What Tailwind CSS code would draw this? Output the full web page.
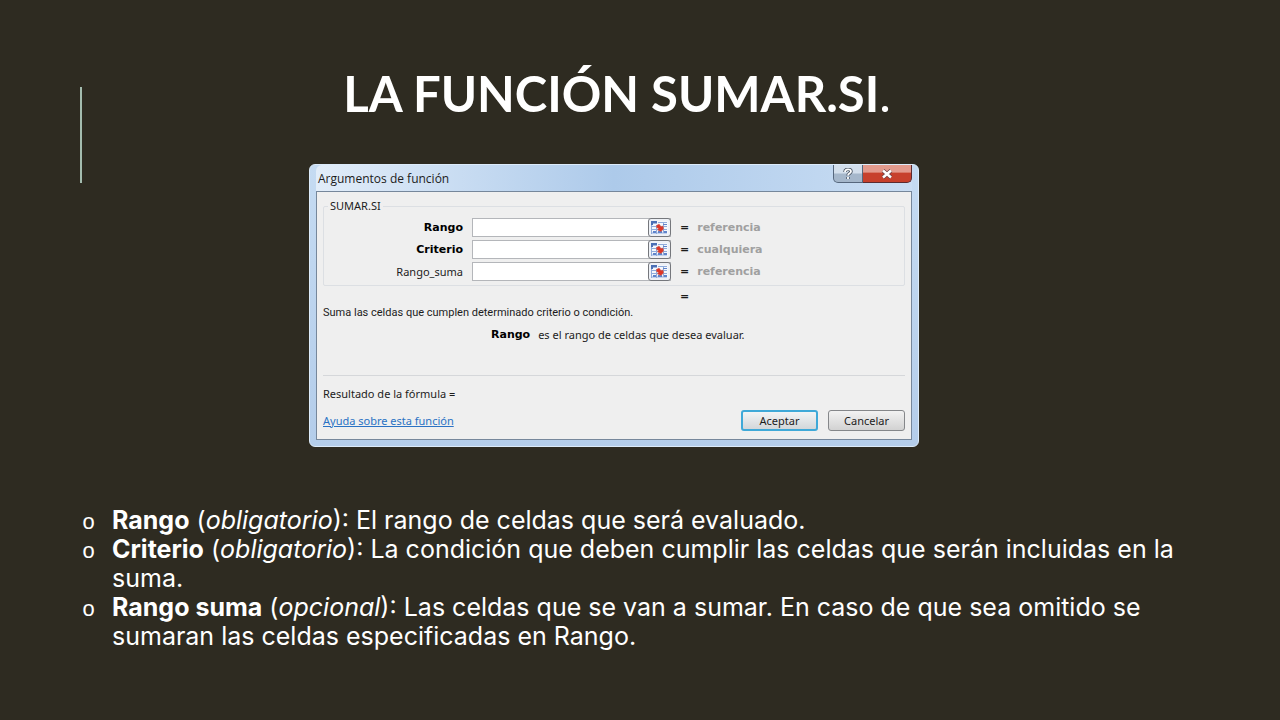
<!DOCTYPE html>
<html lang="es">
<head>
    <meta charset="UTF-8">
    <meta name="viewport" content="width=device-width, initial-scale=1.0">
    <script src="https://cdn.jsdelivr.net/npm/@tailwindcss/browser@4"></script>
    <title>La función SUMAR.SI</title>
</head>

<body class="bg-[#2e2b21] font-['Century_Gothic','Inter',sans-serif] text-white">
    <!-- Icono de referencia de celdas -->
    <svg class="hidden">
        <symbol id="cellRef" viewBox="0 0 17 13">
            <path fill="#f4f7fc" d="M0 0h17v13H0z" />
            <path fill="#4a6fb5" d="M0 0h6v2.500H2V4H0z" />
            <path fill="none" stroke="#8fabdb" d="M7 1.500h9M1 5.500h15M1 8.500h15M1 12h15M.5 4v9M5.500 4v9M12.500 1v11" />
            <path fill="#5f84cb" d="M2 10h3v2H2zM7 10h4v2H7zM13 10h3v2h-3zM12 3h4v1h-4z" />
            <path fill="#dd3526" stroke="#c9655c" stroke-width=".5" d="M5.500 4.500L8 3l2 2.500 2-.5.500 3L10 10.500 6.500 9l1-1.500L5.500 6.500z" />
        </symbol>
    </svg>

    <main class="min-h-screen pt-16 pb-16 px-20">
        <header class="relative">
            <span class="absolute left-0 top-[23px] h-24 w-0.5 bg-[#a3bcae]"></span>
            <h1 class="pr-[46px] text-center font-['Century_Gothic','Lato',sans-serif] text-[49px] leading-[58px] font-bold">LA FUNCIÓN SUMAR.SI<span class="font-normal">.</span></h1>
        </header>

        <!-- Cuadro de diálogo -->
        <div class="mx-auto mt-[42px] w-full max-w-[1172px] pr-[52px]">
            <section class="mx-auto w-full max-w-[610px] rounded-md border border-[#dcebfa] bg-linear-to-b from-[#c5dbf2] to-[#b4cdea] px-1.5 pb-1.5 font-['Tahoma','Noto_Sans',sans-serif] text-[11px] leading-4 text-[#1c1c1c]">
                <div class="flex h-[26px] items-start justify-between rounded-t-md bg-linear-to-r from-[#e2edf9] via-[#adcaea] to-[#c9ddf3]">
                    <h2 class="pt-1 pl-0.5 font-['Segoe_UI','Open_Sans',sans-serif] text-[12px] leading-5">Argumentos de función</h2>
                    <div class="flex">
                        <button type="button" aria-label="Ayuda" class="flex h-[18px] w-[30px] items-center justify-center rounded-bl-[5px] border border-t-0 border-[#56677d] bg-linear-to-b from-[#d3dfec] from-45% to-[#a5b7cb] to-55%">
                            <svg class="h-3 w-3" viewBox="0 0 12 12" fill="none">
                                <path d="M3 4c0-3.500 6-3.500 6-.5 0 2-3 1.500-3 4M6 9v2" stroke="#4b5665" stroke-width="3.500" />
                                <path d="M3 4c0-3.500 6-3.500 6-.5 0 2-3 1.500-3 4M6 9v2" stroke="#fff" stroke-width="1.800" />
                            </svg>
                        </button>
                        <button type="button" aria-label="Cerrar" class="flex h-[18px] w-[49px] items-center justify-center rounded-br-[5px] border border-t-0 border-l-0 border-[#5c2b30] bg-linear-to-b from-[#e39a8d] from-40% to-[#c7402c] to-50%">
                            <svg class="h-3 w-3" viewBox="0 0 12 12" fill="none">
                                <path d="M2 2.500l8 7M10 2.500l-8 7" stroke="#6b4247" stroke-width="4" />
                                <path d="M2 2.500l8 7M10 2.500l-8 7" stroke="#fff" stroke-width="2.500" />
                            </svg>
                        </button>
                    </div>
                </div>

                <form id="argsForm" class="border border-[#76879b] bg-[#efefef] px-1.5 pt-1.5 pb-2">
                    <fieldset class="rounded-xs border border-[#dcdfe3] pb-1">
                        <legend class="ml-1 px-0.5">SUMAR.SI</legend>
                        <div class="grid grid-cols-[139px_199px_1fr] items-center gap-x-[9px] gap-y-[3px] pt-1">
                            <label for="rango" class="text-right font-['Verdana','DejaVu_Sans',sans-serif] font-bold text-black">Rango</label>
                            <div class="flex h-[19px] border border-[#b4b6ba] bg-white">
                                <input type="text" id="rango" class="min-w-0 flex-1 px-1 outline-none">
                                <button type="button" aria-label="Seleccionar rango" class="-my-px -mr-px flex w-[23px] items-center justify-center rounded-[3px] border border-[#75777c] bg-[#eef1f6]"><svg class="h-[13px] w-[17px]"><use href="#cellRef" /></svg></button>
                            </div>
                            <p class="flex gap-2 font-['Verdana','DejaVu_Sans',sans-serif] font-bold"><span>=</span><span class="text-[#a0a0a0]">referencia</span></p>

                            <label for="criterio" class="text-right font-['Verdana','DejaVu_Sans',sans-serif] font-bold text-black">Criterio</label>
                            <div class="flex h-[19px] border border-[#b4b6ba] bg-white">
                                <input type="text" id="criterio" class="min-w-0 flex-1 px-1 outline-none">
                                <button type="button" aria-label="Seleccionar criterio" class="-my-px -mr-px flex w-[23px] items-center justify-center rounded-[3px] border border-[#75777c] bg-[#eef1f6]"><svg class="h-[13px] w-[17px]"><use href="#cellRef" /></svg></button>
                            </div>
                            <p class="flex gap-2 font-['Verdana','DejaVu_Sans',sans-serif] font-bold"><span>=</span><span class="text-[#a0a0a0]">cualquiera</span></p>

                            <label for="rangoSuma" class="text-right">Rango_suma</label>
                            <div class="flex h-[19px] border border-[#b4b6ba] bg-white">
                                <input type="text" id="rangoSuma" class="min-w-0 flex-1 px-1 outline-none">
                                <button type="button" aria-label="Seleccionar rango de suma" class="-my-px -mr-px flex w-[23px] items-center justify-center rounded-[3px] border border-[#75777c] bg-[#eef1f6]"><svg class="h-[13px] w-[17px]"><use href="#cellRef" /></svg></button>
                            </div>
                            <p class="flex gap-2 font-['Verdana','DejaVu_Sans',sans-serif] font-bold"><span>=</span><span class="text-[#a0a0a0]">referencia</span></p>
                        </div>
                    </fieldset>

                    <p class="pt-[3px] pl-[357px] font-['Verdana','DejaVu_Sans',sans-serif] font-bold">=</p>
                    <p class="font-['Tahoma','Roboto',sans-serif]">Suma las celdas que cumplen determinado criterio o condición.</p>
                    <p class="mt-1.5 flex gap-2 pl-[168px]"><b class="font-['Verdana','DejaVu_Sans',sans-serif] text-black">Rango</b><span>es el rango de celdas que desea evaluar.</span></p>
                    <hr class="mt-8 border-[#d5d7da]">
                    <p class="mt-2.5">Resultado de la fórmula =</p>
                    <div class="mt-2 flex items-center justify-between">
                        <a href="#" class="text-[#2a72c4] underline">Ayuda sobre esta función</a>
                        <div class="flex gap-2.5">
                            <button type="submit" class="h-[21px] w-[77px] rounded-[3px] border-2 border-[#3fa9d8] bg-linear-to-b from-[#f2f4f5] to-[#d3d7da]">Aceptar</button>
                            <button type="button" class="h-[21px] w-[77px] rounded-[3px] border border-[#85878a] bg-linear-to-b from-[#f2f2f2] to-[#d2d2d2]">Cancelar</button>
                        </div>
                    </div>
                </form>
            </section>
        </div>

        <!-- Argumentos -->
        <ul class="mt-[59px] max-w-[1100px] text-[25px] leading-[29px]">
            <li class="flex items-baseline gap-3.5"><span class="w-[18px] shrink-0 pl-0.5 font-['Courier_New','Liberation_Mono',monospace] text-[22px] leading-5">o</span><p><b>Rango</b> (<i>obligatorio</i>): El rango de celdas que será evaluado.</p></li>
            <li class="flex items-baseline gap-3.5"><span class="w-[18px] shrink-0 pl-0.5 font-['Courier_New','Liberation_Mono',monospace] text-[22px] leading-5">o</span><p><b>Criterio</b> (<i>obligatorio</i>): La condición que deben cumplir las celdas que serán incluidas en la suma.</p></li>
            <li class="flex items-baseline gap-3.5"><span class="w-[18px] shrink-0 pl-0.5 font-['Courier_New','Liberation_Mono',monospace] text-[22px] leading-5">o</span><p><b>Rango suma</b> (<i>opcional</i>): Las celdas que se van a sumar. En caso de que sea omitido se sumaran las celdas especificadas en Rango.</p></li>
        </ul>
    </main>
</body>

</html>
